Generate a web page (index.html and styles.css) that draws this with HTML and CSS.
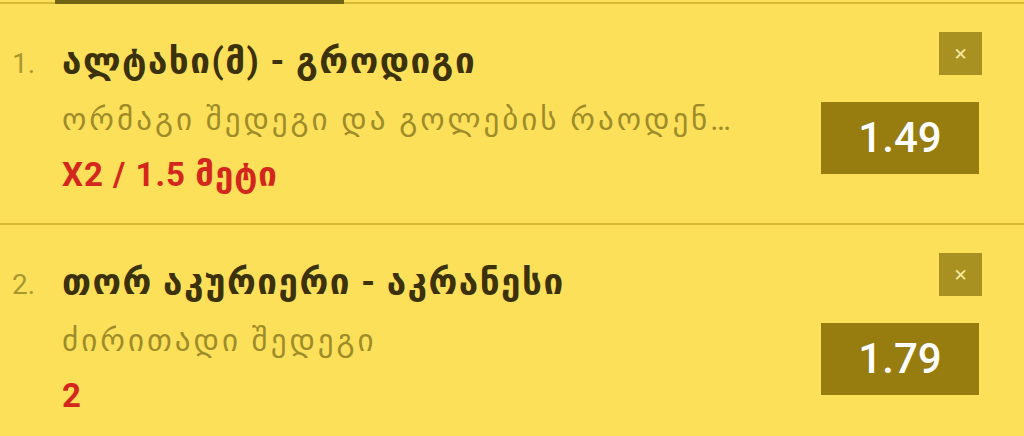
FILE: index.html
```html
<!DOCTYPE html>
<html lang="ka">
<head>
  <meta charset="UTF-8">
  <meta name="viewport" content="width=device-width, initial-scale=1.0">
  <title>Betslip</title>
  <link rel="stylesheet" href="styles.css">
</head>
<body>
  <div class="tabbar">
    <div class="tab-active"></div>
  </div>

  <div class="bet-list">
    <div class="bet">
      <div class="bet-info">
        <div class="bet-title">
          <span class="bet-num">1.</span>
          <span class="bet-match">ალტახი(მ) - გროდიგი</span>
        </div>
        <div class="bet-market">ორმაგი შედეგი და გოლების რაოდენობა</div>
        <div class="bet-pick">X2 / 1.5 მეტი</div>
      </div>
      <div class="bet-side">
        <button class="remove">&#x2715;</button>
        <div class="odds">1.49</div>
      </div>
    </div>

    <div class="bet">
      <div class="bet-info">
        <div class="bet-title">
          <span class="bet-num">2.</span>
          <span class="bet-match">თორ აკურიერი - აკრანესი</span>
        </div>
        <div class="bet-market">ძირითადი შედეგი</div>
        <div class="bet-pick">2</div>
      </div>
      <div class="bet-side">
        <button class="remove">&#x2715;</button>
        <div class="odds">1.79</div>
      </div>
    </div>
  </div>
</body>
</html>
```

FILE: styles.css
```css
body {
  margin: 0;
  padding: 0;
  background-color: #fde05a;
  font-family: Roboto, "DejaVu Sans", sans-serif;
  overflow: hidden;
}

.tabbar {
  height: 4px;
  background: linear-gradient(to bottom, transparent 2px, #d6b831 2px);
}

.tab-active {
  margin-left: 55px;
  width: 289px;
  height: 4px;
  background-color: #6f6314;
}

.bet {
  display: flex;
  border-bottom: 2px solid #d6b831;
  height: 219px;
}

.bet-info {
  flex: 1;
  min-width: 0;
  padding-left: 12px;
}

.bet-title {
  display: flex;
  align-items: baseline;
  margin-top: 38px;
  height: 40px;
  line-height: 40px;
}

.bet-num {
  width: 50px;
  font-size: 28px;
  color: #a8982f;
}

.bet-match {
  font-size: 35px;
  font-weight: bold;
  letter-spacing: 1.5px;
  color: #3b310a;
  white-space: nowrap;
}

.bet-market {
  margin-top: 18px;
  padding-left: 50px;
  height: 40px;
  line-height: 40px;
  font-size: 31px;
  letter-spacing: 3px;
  color: #9e8c29;
  white-space: nowrap;
  overflow: hidden;
  text-overflow: ellipsis;
}

.bet-pick {
  margin-top: 15px;
  padding-left: 50px;
  height: 40px;
  line-height: 40px;
  font-size: 33px;
  font-weight: bold;
  letter-spacing: 1px;
  color: #d3261d;
}

.bet-side {
  width: 161px;
  margin-left: 66px;
  margin-right: 42px;
  display: flex;
  flex-direction: column;
  align-items: flex-end;
}

.remove {
  margin-top: 28px;
  width: 43px;
  height: 43px;
  padding: 0;
  border: none;
  background-color: #a89021;
  color: #f6eaa4;
  font-size: 17px;
  font-family: "DejaVu Sans", sans-serif;
  cursor: pointer;
}

.odds {
  margin-top: 27px;
  margin-right: 3px;
  width: 158px;
  height: 72px;
  line-height: 72px;
  background-color: #977c10;
  color: #ffffff;
  text-align: center;
  font-size: 42px;
  font-weight: 500;
}
```
